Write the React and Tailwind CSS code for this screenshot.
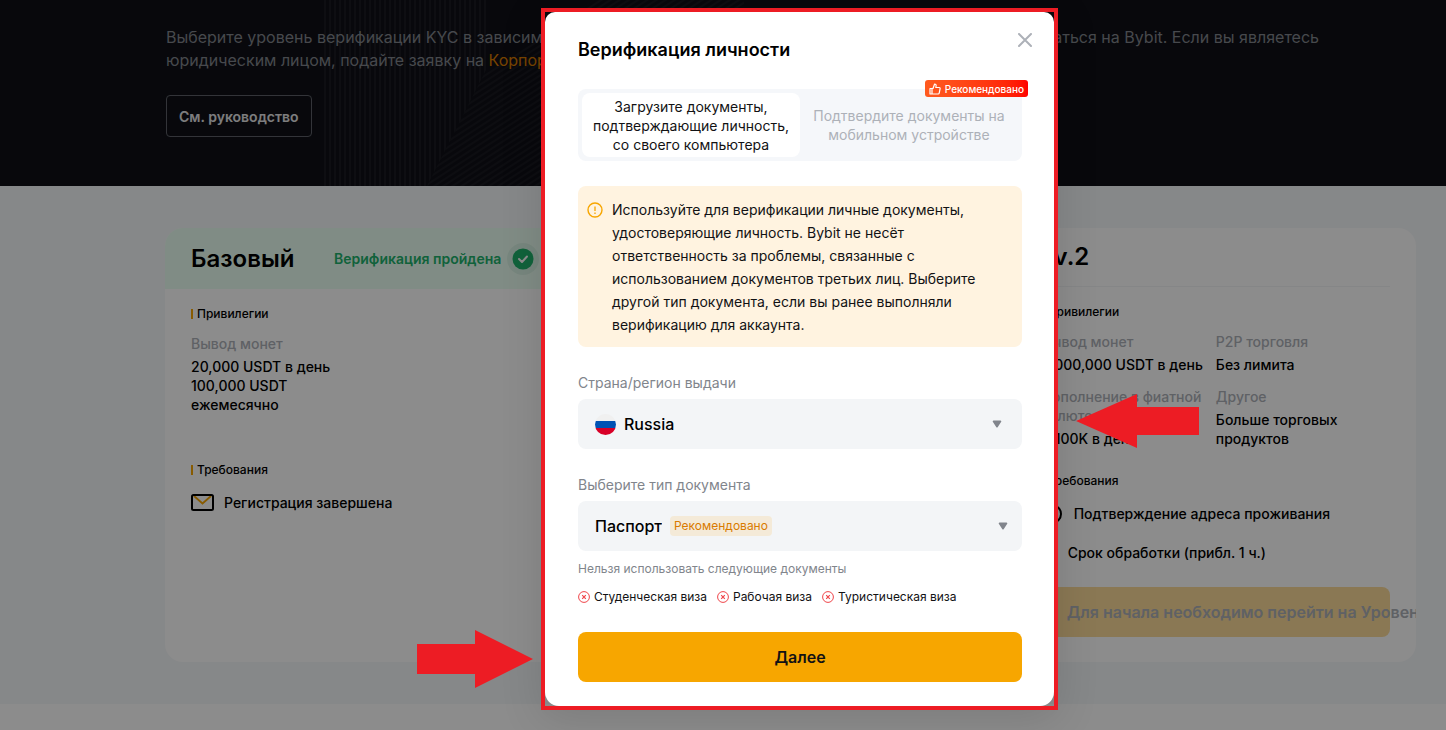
import { useState } from 'react'

const bannedDocuments = ['Студенческая виза', 'Рабочая виза', 'Туристическая виза']

function SectionTitle({ children }) {
  return (
    <h3 className="flex items-center gap-1 text-[12px] leading-4 font-medium text-black">
      <span className="h-[10px] w-[2px] bg-[#f7a600]" />
      {children}
    </h3>
  )
}

function Privilege({ label, children }) {
  return (
    <div className="text-[14px] leading-[19px] font-medium text-black">
      <dt className="text-[#adb1b8]">{label}</dt>
      <dd className="mt-1">{children}</dd>
    </div>
  )
}

function HeroPattern() {
  return (
    <svg
      className="absolute top-0 left-[324px] h-[186px] w-[420px]"
      viewBox="0 0 420 186"
      fill="none"
      aria-hidden="true"
    >
      <defs>
        <pattern id="vertical" width="5" height="5" patternUnits="userSpaceOnUse">
          <path d="M1 0v5" stroke="#1d1e24" strokeWidth="1.5" />
        </pattern>
        <pattern
          id="diagonal"
          width="5"
          height="5"
          patternUnits="userSpaceOnUse"
          patternTransform="rotate(-33)"
        >
          <path d="M0 1h5" stroke="#1b1c22" strokeWidth="1.5" />
        </pattern>
      </defs>
      <path d="M0 0H164V66L103 186H0Z" fill="url(#vertical)" />
      <path d="M103 186L160 74L270 0H420V186Z" fill="url(#diagonal)" />
    </svg>
  )
}

function Hero() {
  return (
    <header className="relative h-[186px] bg-[#0f1017] pt-[26px] pr-[127px] pl-[166px]">
      <HeroPattern />
      <div className="relative text-[16px] leading-[23px] text-[#81858c]">
        <p className="flex justify-between whitespace-nowrap">
          <span>Выберите уровень верификации KYC в зависимости</span>
          <span>пользоваться на Bybit. Если вы являетесь</span>
        </p>
        <p>
          юридическим лицом, подайте заявку на{' '}
          <a href="#corporate" className="text-[#d97b00]">
            Корпор
          </a>
        </p>
        <button
          type="button"
          className="mt-[23px] h-[42px] rounded border border-[#5d6068] px-3 text-[14px] font-semibold text-[#e4e4e6]"
        >
          См. руководство
        </button>
      </div>
    </header>
  )
}

function BasicCard() {
  return (
    <article className="overflow-hidden rounded-[18px] bg-white">
      <div className="flex h-[61px] items-center justify-between bg-[#eafff2] px-[26px]">
        <h2 className="text-[24px] font-semibold text-black">Базовый</h2>
        <p className="flex items-center gap-[6px] text-[14px] font-semibold whitespace-nowrap text-[#20b26c]">
          Верификация пройдена
          <span className="flex size-8 items-center justify-center rounded-full bg-[#d9f5e5]">
            <svg viewBox="0 0 22 22" className="size-[22px]" fill="none">
              <circle cx="11" cy="11" r="10.5" fill="#20b26c" />
              <path
                d="M7 11l3 3 5-5.500"
                stroke="#fff"
                strokeWidth="2"
                strokeLinecap="round"
                strokeLinejoin="round"
              />
            </svg>
          </span>
        </p>
      </div>
      <div className="px-[26px] pt-[17px]">
        <SectionTitle>Привилегии</SectionTitle>
        <dl className="mt-3">
          <Privilege label="Вывод монет">
            20,000 USDT в день
            <br />
            100,000 USDT
            <br />
            ежемесячно
          </Privilege>
        </dl>
        <div className="mt-12">
          <SectionTitle>Требования</SectionTitle>
        </div>
        <p className="mt-[14px] flex items-center gap-[10px] text-[14px] font-medium text-black">
          <svg viewBox="0 0 23 17" className="h-[17px] w-[23px]" fill="none">
            <path d="M3 2l8.500 7.500L20 2" stroke="#f7a600" strokeWidth="1.8" />
            <rect x="1" y="1" width="21" height="15" rx="1.500" stroke="#000" strokeWidth="2" />
          </svg>
          Регистрация завершена
        </p>
      </div>
    </article>
  )
}

function LevelTwoCard() {
  return (
    <article className="col-start-3 overflow-hidden rounded-[18px] bg-white px-[26px] pb-[25px]">
      <h2 className="flex h-[59px] items-center border-b border-[#f3f4f6] text-[24px] font-semibold text-black">
        Lv.2
      </h2>
      <div className="pt-[17px]">
        <SectionTitle>Привилегии</SectionTitle>
        <dl className="mt-3 grid grid-cols-2 gap-y-[13px]">
          <Privilege label="Вывод монет">
            <span className="whitespace-nowrap">2,000,000 USDT в день</span>
          </Privilege>
          <Privilege label="P2P торговля">Без лимита</Privilege>
          <Privilege
            label={
              <>
                Пополнение в фиатной
                <br />
                валюте
              </>
            }
          >
            ≥ 100K в день
          </Privilege>
          <Privilege label="Другое">
            Больше торговых
            <br />
            продуктов
          </Privilege>
        </dl>
        <div className="mt-[25px]">
          <SectionTitle>Требования</SectionTitle>
        </div>
        <p className="mt-[15px] flex items-center gap-3 text-[14px] leading-5 font-medium text-black">
          <span className="size-5 rounded-full border-2 border-black" />
          Подтверждение адреса проживания
        </p>
        <p className="mt-[19px] pl-[26px] text-[14px] leading-5 font-medium text-black">
          Срок обработки (прибл. 1 ч.)
        </p>
      </div>
      <button
        type="button"
        disabled
        className="mt-6 h-[50px] w-full rounded-lg bg-[#fbdb99] pl-[25px] text-left text-[16px] font-semibold whitespace-nowrap text-[#adb1b8]"
      >
        Для начала необходимо перейти на Уровень 1
      </button>
    </article>
  )
}

function Caret() {
  return (
    <svg viewBox="0 0 10 8" className="pointer-events-none h-2 w-[10px]" aria-hidden="true">
      <path d="M1.500 .5h7a.8.8 0 0 1 .7 1.200L5.800 7a1 1 0 0 1-1.600 0L.8 1.700a.8.8 0 0 1 .7-1.200z" fill="#81858c" />
    </svg>
  )
}

function RussiaFlag() {
  return (
    <svg viewBox="0 0 21 21" className="size-[21px]" aria-hidden="true">
      <clipPath id="flag">
        <circle cx="10.500" cy="10.500" r="10.500" />
      </clipPath>
      <g clipPath="url(#flag)">
        <path d="M0 0h21v7H0z" fill="#f0f0f0" />
        <path d="M0 7h21v7H0z" fill="#0052b4" />
        <path d="M0 14h21v7H0z" fill="#d80027" />
      </g>
    </svg>
  )
}

function VerificationModal() {
  const [method, setMethod] = useState('computer')
  const tabStyle = (name) =>
    method === name
      ? 'rounded-lg bg-white text-[#121214]'
      : 'text-[#adb1b8]'

  return (
    <div className="border-4 border-[#ed1c24] shadow-[0_8px_40px_rgba(0,0,0,0.12)]">
      <section
        role="dialog"
        aria-labelledby="modal-title"
        className="relative w-[509px] rounded-t-[10px] rounded-b-[14px] bg-white pt-[25px] pr-8 pb-6 pl-[33px]"
      >
        <h1 id="modal-title" className="text-[18px] leading-[26px] font-semibold text-black">
          Верификация личности
        </h1>
        <button type="button" aria-label="Закрыть" className="absolute top-[21px] right-[22px]">
          <svg viewBox="0 0 14 14" className="size-[14px]" fill="none">
            <path d="M1 1l12 12M13 1L1 13" stroke="#adb1b8" strokeWidth="2" strokeLinecap="round" />
          </svg>
        </button>

        <div className="relative mt-[26px] grid grid-cols-2 rounded-lg bg-[#f5f7fa] p-1 text-[14px] leading-[19px]">
          <button
            type="button"
            onClick={() => setMethod('computer')}
            className={`h-[64px] ${tabStyle('computer')}`}
          >
            Загрузите документы,
            <br />
            подтверждающие личность,
            <br />
            со своего компьютера
          </button>
          <button
            type="button"
            onClick={() => setMethod('mobile')}
            className={`h-[64px] ${tabStyle('mobile')}`}
          >
            Подтвердите документы на
            <br />
            мобильном устройстве
          </button>
          <span className="absolute -top-[9px] -right-[6px] flex h-[17px] items-center gap-1 rounded-[3px] bg-gradient-to-r from-[#ff5a1f] to-[#ff0000] px-1 text-[10px] leading-4 font-medium text-white">
            <svg viewBox="0 0 12 12" className="size-3" fill="none" stroke="#fff" strokeWidth="1.200" strokeLinejoin="round">
              <path d="M1 5.500h2V11H1zM3 5.500h1L5.600 1c1.200 0 1.700.8 1.500 1.900L6.800 4.500h3.400c.7 0 1 .5.900 1.100l-.9 4.500c-.1.500-.5.9-1 .9H3" />
            </svg>
            Рекомендовано
          </span>
        </div>

        <div className="mt-[25px] flex gap-[9px] rounded-lg bg-[#fff3e0] pt-3 pr-4 pb-[11px] pl-[9px]">
          <svg viewBox="0 0 16 16" className="mt-[4px] size-4 shrink-0" fill="none" stroke="#f7a600">
            <circle cx="8" cy="8" r="7" strokeWidth="1.400" />
            <path d="M8 4.500v4.500M8 10.500v1.400" strokeWidth="1.300" />
          </svg>
          <p className="text-[14px] leading-[23px] text-[#121214]">
            Используйте для верификации личные документы,
            <br />
            удостоверяющие личность. Bybit не несёт
            <br />
            ответственность за проблемы, связанные с
            <br />
            использованием документов третьих лиц. Выберите
            <br />
            другой тип документа, если вы ранее выполняли
            <br />
            верификацию для аккаунта.
          </p>
        </div>

        <label htmlFor="country" className="mt-[26px] block text-[14px] leading-5 text-[#81858c]">
          Страна/регион выдачи
        </label>
        <div className="mt-[6px] flex h-[50px] items-center gap-2 rounded-lg bg-[#f3f5f7] pr-5 pl-[17px]">
          <RussiaFlag />
          <select
            id="country"
            className="h-full flex-1 appearance-none bg-transparent text-[16px] font-medium text-black outline-none"
          >
            <option>Russia</option>
          </select>
          <Caret />
        </div>

        <label htmlFor="document" className="mt-[26px] block text-[14px] leading-5 text-[#81858c]">
          Выберите тип документа
        </label>
        <div className="mt-[6px] flex h-[50px] items-center gap-2 rounded-lg bg-[#f3f5f7] pr-[14px] pl-[17px]">
          <select
            id="document"
            className="h-full appearance-none bg-transparent text-[16px] font-medium text-black outline-none [field-sizing:content]"
          >
            <option>Паспорт</option>
          </select>
          <span className="rounded bg-[#f4ead8] px-1 text-[12px] leading-5 text-[#d97b00]">
            Рекомендовано
          </span>
          <span className="ml-auto">
            <Caret />
          </span>
        </div>

        <p className="mt-[9px] text-[12px] leading-[18px] text-[#81858c]">
          Нельзя использовать следующие документы
        </p>
        <ul className="mt-[10px] flex gap-[10px] text-[12px] leading-[18px] text-[#121214]">
          {bannedDocuments.map((name) => (
            <li key={name} className="flex items-center gap-1 whitespace-nowrap">
              <svg viewBox="0 0 12 12" className="size-3" fill="none" stroke="#ef454a">
                <circle cx="6" cy="6" r="5.400" />
                <path d="M4.200 4.200l3.600 3.600M7.800 4.200L4.200 7.800" strokeWidth="1.200" />
              </svg>
              {name}
            </li>
          ))}
        </ul>

        <button
          type="button"
          className="mt-[26px] h-[50px] w-full rounded-lg bg-[#f7a600] text-[16px] font-semibold text-[#121214]"
        >
          Далее
        </button>
      </section>
    </div>
  )
}

export default function App() {
  return (
    <div className="relative min-h-screen overflow-hidden bg-white font-['Inter','Noto_Sans',sans-serif]">
      <Hero />
      <main className="grid grid-cols-3 gap-[25px] bg-[#f5f7fa] pt-[42px] pr-[30px] pb-[42px] pl-[165px]">
        <BasicCard />
        <LevelTwoCard />
      </main>

      <div className="absolute inset-0 flex items-start justify-center bg-black/45 pt-2 pl-[153px]">
        <VerificationModal />
      </div>

      {/* pointer arrows */}
      <svg viewBox="0 0 123 54" className="absolute top-[394px] left-[1076px] h-[54px] w-[123px]">
        <path d="M0 27L61 0v13h62v28H61v13z" fill="#ed1c24" />
      </svg>
      <svg viewBox="0 0 116 58" className="absolute top-[630px] left-[417px] h-[58px] w-[116px]">
        <path d="M116 29L58 58V44H0V14h58V0z" fill="#ed1c24" />
      </svg>
    </div>
  )
}
